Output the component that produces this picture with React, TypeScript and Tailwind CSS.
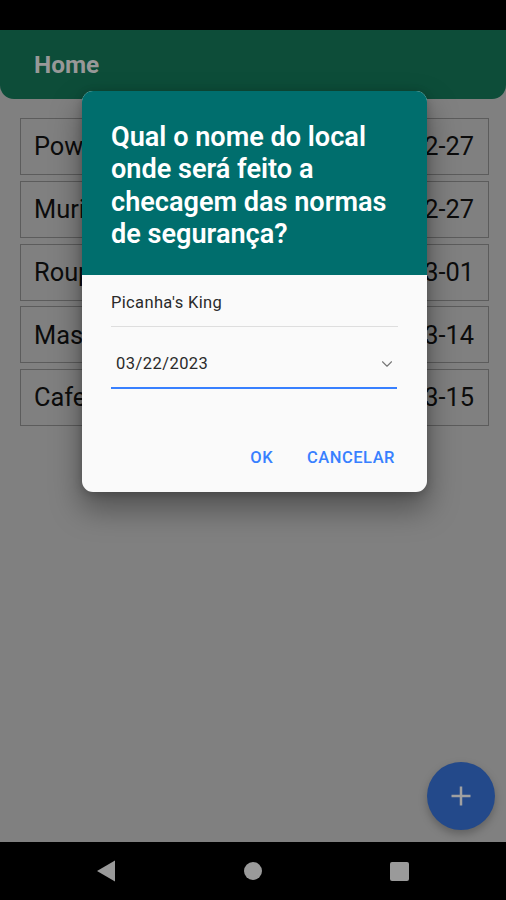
import { ChevronDown } from 'lucide-react';

interface Place {
  name: string;
  date: string;
}

const places: Place[] = [
  { name: 'Power', date: '02-27' },
  { name: 'Muriel', date: '02-27' },
  { name: 'Roupas', date: '03-01' },
  { name: 'Massas', date: '03-14' },
  { name: 'Cafe', date: '03-15' },
];

function PlaceList() {
  return (
    <ul className="flex flex-col gap-[5.8px] pl-5 pr-[17px] pt-[19px]">
      {places.map((place) => (
        <li
          key={place.name}
          className="flex h-[57px] items-center justify-between border-[1.5px] border-[#5c5c5c] pl-[13px] pr-[14px] pt-px text-[25.4px] leading-none text-[#0c0c0c]"
        >
          <span>{place.name}</span>
          <span>{place.date}</span>
        </li>
      ))}
    </ul>
  );
}

function PlaceDialog() {
  return (
    <div
      role="dialog"
      className="absolute left-[82px] top-[91px] flex h-[401px] w-[345px] flex-col overflow-hidden rounded-[11px] bg-[#fafafa] shadow-[0_16px_30px_2px_rgba(0,0,0,0.35),0_2px_10px_rgba(0,0,0,0.2)]"
    >
      <h2 className="h-[184px] bg-[#006e6d] pl-[29px] pt-[30px] text-[27.1px] font-semibold leading-[32.4px] text-white">
        Qual o nome do local
        <br />
        onde será feito a
        <br />
        checagem das normas
        <br />
        de segurança?
      </h2>
      <div className="mx-[29px] flex h-[52px] items-center border-b border-[#dedede] pt-[6px] text-[16.5px] tracking-[0.35px] text-[#2a2a2a]">
        Picanha's King
      </div>
      <div className="ml-[29px] mr-[30px] flex h-[62px] items-center justify-between border-b-2 border-[#3880ff] pl-[5px] pr-px pt-[14px] text-[16.5px] tracking-[0.45px] text-[#2a2a2a]">
        <span>03/22/2023</span>
        <ChevronDown className="h-[18px] w-[18px] text-[#777]" strokeWidth={1.5} />
      </div>
      <div className="mt-[57px] flex justify-end gap-[34px] pr-8 text-[16.5px] font-medium leading-6 tracking-[0.5px] text-[#3880ff]">
        <button>OK</button>
        <button>CANCELAR</button>
      </div>
    </div>
  );
}

export default function App() {
  return (
    <div className="relative flex h-[900px] w-[506px] flex-col overflow-hidden bg-black font-['Roboto',sans-serif]">
      <div className="h-[30px] shrink-0 bg-black" />

      <main className="flex-1 bg-[#808080]">
        <header className="flex h-[69px] items-center rounded-b-[14px] bg-[#0d4d39] pl-[34px] pt-px text-[24.4px] font-bold text-[#989898]">
          Home
        </header>
        <PlaceList />
      </main>

      <button className="absolute left-[427px] top-[762px] flex h-[68px] w-[68px] items-center justify-center rounded-full bg-[#23498a] shadow-[0_4px_8px_rgba(0,0,0,0.25)]">
        <svg viewBox="0 0 20 20" className="h-5 w-5" fill="none" stroke="#a0a0a0" strokeWidth="2.5">
          <path d="M10 .5v19M.5 10h19" />
        </svg>
      </button>

      {/* Android navigation bar */}
      <nav className="flex h-[58px] shrink-0 items-center justify-between bg-black pl-[96px] pr-[97px]">
        <svg viewBox="0 0 20 22" className="h-[22px] w-5" fill="#9a9a9a">
          <path d="M1 11 19 .5v21z" />
        </svg>
        <div className="h-[18px] w-[18px] rounded-full bg-[#9a9a9a]" />
        <div className="h-[19px] w-[19px] rounded-[2px] bg-[#9a9a9a]" />
      </nav>

      <PlaceDialog />
    </div>
  );
}
